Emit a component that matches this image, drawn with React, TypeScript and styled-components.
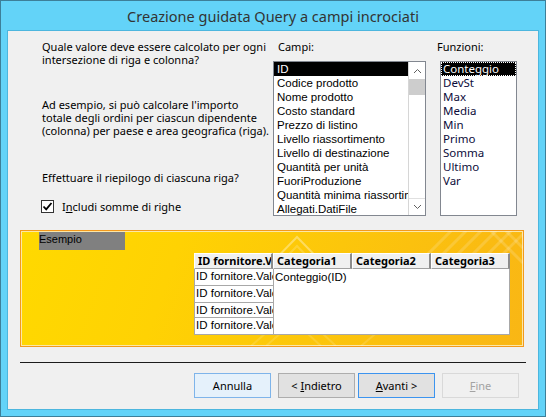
import React from "react";
import styled, { createGlobalStyle } from "styled-components";

const Global = createGlobalStyle`
  html, body { margin: 0; padding: 0; background: #ffffff; }
  body { font-family: "Noto Sans", sans-serif; }
  * { box-sizing: border-box; }
`;

const Window = styled.div`
  width: 546px;
  height: 417px;
  border: 1px solid #3d7f99;
  background: #63d3f8;
  display: flex;
  flex-direction: column;
`;

const TitleBar = styled.div`
  height: 29px;
  display: flex;
  align-items: center;
  justify-content: center;
  padding-top: 1px;
  font-family: "Noto Sans", sans-serif;
  font-size: 14.5px;
  color: #333333;
`;

const Client = styled.div`
  flex: 1;
  margin: 0 6px 6px;
  border: 1px solid #4cb6de;
  background: #f0f0f0;
  display: flex;
  flex-direction: column;
`;

const TopArea = styled.div`
  height: 199px;
  padding: 9px 0 0 34px;
  display: flex;
`;

const LeftCol = styled.div`
  width: 231px;
  display: flex;
  flex-direction: column;
`;

const Para = styled.div<{ $mt?: number }>`
  margin-top: ${(p) => p.$mt ?? 0}px;
  font-family: "Noto Sans", sans-serif;
  font-size: 11px;
  line-height: 13px;
  color: #000;
  white-space: nowrap;
`;

const CheckRow = styled.label`
  margin-top: 14px;
  height: 16px;
  display: flex;
  align-items: center;
  gap: 8px;
  margin-left: -1px;
  font-family: "Noto Sans", sans-serif;
  font-size: 11px;
  color: #000;
`;

const CheckBox = styled.span`
  width: 13px;
  height: 13px;
  border: 1px solid #333;
  background: #fff;
  display: flex;
  align-items: center;
  justify-content: center;
`;

const FieldCol = styled.div<{ $w: number; $ml?: number }>`
  width: ${(p) => p.$w}px;
  margin-left: ${(p) => p.$ml ?? 0}px;
  display: flex;
  flex-direction: column;
`;

const FieldLabel = styled.div<{ $indent: number }>`
  height: 13px;
  line-height: 13px;
  margin-left: ${(p) => p.$indent}px;
  font-family: "Noto Sans", sans-serif;
  font-size: 11px;
  color: #000;
  white-space: nowrap;
`;

const ListBox = styled.div`
  margin-top: 8px;
  height: 155px;
  border: 1px solid #828790;
  background: #fff;
  display: flex;
  overflow: hidden;
`;

const Items = styled.div`
  flex: 1;
  min-width: 0;
  display: flex;
  flex-direction: column;
`;

const Item = styled.div<{ $sel?: boolean; $focus?: boolean; $kind: "campi" | "funz" }>`
  flex: none;
  height: 14px;
  line-height: 14px;
  padding-left: ${(p) => (p.$kind === "campi" ? 3 : 2)}px;
  white-space: nowrap;
  overflow: hidden;
  font-family: ${(p) =>
    p.$kind === "campi" ? `"Liberation Sans", Arial, sans-serif` : `"Noto Sans", sans-serif`};
  font-size: 11.5px;
  background: ${(p) => (p.$sel ? "#000" : "transparent")};
  color: ${(p) => (p.$sel ? "#fff" : p.$kind === "funz" ? "#0c0c3a" : "#000")};
  outline: ${(p) => (p.$focus ? "1px dotted #fff" : "none")};
  outline-offset: -1px;
`;

const ScrollBar = styled.div`
  width: 17px;
  border-left: 1px solid #d6d6d6;
  background: #fff;
  display: flex;
  flex-direction: column;
`;

const ScrollBtn = styled.div<{ $bottom?: boolean }>`
  height: 17px;
  display: flex;
  align-items: center;
  justify-content: center;
  border-top: ${(p) => (p.$bottom ? "1px solid #e0e0e0" : "none")};
`;

const Track = styled.div`
  flex: 1;
  background: #fff;
`;

const Thumb = styled.div`
  height: 16px;
  background: #cdcdcd;
`;

const Sample = styled.div`
  position: relative;
  margin-left: 12px;
  width: 504px;
  height: 117px;
  border: 1px solid #f39a1c;
  box-shadow: inset 0 0 0 1px #fde7a6;
  background: linear-gradient(110deg, #ffd900 0%, #ffd203 30%, #fcc60b 60%, #f9b615 100%);
  padding: 1px 0 0 18px;
  overflow: hidden;
`;

const Deco = styled.svg`
  position: absolute;
  inset: 0;
  pointer-events: none;
`;

const SampleLabel = styled.div`
  position: relative;
  width: 86px;
  height: 18px;
  background: #808080;
  font-family: "Liberation Sans", Arial, sans-serif;
  font-size: 11px;
  line-height: 14px;
  color: #000;
`;

const Grid = styled.div`
  position: relative;
  margin: 3px 0 0 155px;
  display: grid;
  grid-template-columns: 79px 79px 79px 79px;
  grid-template-rows: 16px 17px 17px 15px 17px;
  width: 316px;
`;

const HeadCell = styled.div`
  background: #f0f0f0;
  border-top: 1px solid #fff;
  border-left: 1px solid #fff;
  border-right: 2px solid #8c8c8c;
  border-bottom: 1px solid #a0a0a0;
  padding-left: 3px;
  font-family: "Noto Sans", sans-serif;
  font-weight: 700;
  font-size: 11px;
  line-height: 14px;
  color: #000;
  white-space: nowrap;
  overflow: hidden;
`;

const RowCell = styled.div`
  background: #fff;
  border-left: 1px solid #a8a8a8;
  border-bottom: 1px solid #a8a8a8;
  padding-left: 1px;
  font-family: "Liberation Sans", Arial, sans-serif;
  font-size: 11.5px;
  line-height: 15px;
  color: #000;
  white-space: nowrap;
  overflow: hidden;
`;

const DataArea = styled.div`
  grid-column: 2 / 5;
  grid-row: 2 / 6;
  background: #fff;
  border: 1px solid #a8a8a8;
  border-top: none;
  padding-left: 1px;
  font-family: "Liberation Sans", Arial, sans-serif;
  font-size: 11.5px;
  line-height: 16px;
  color: #000;
`;

const Separator = styled.div`
  margin: 15px 0 0 12px;
  width: 506px;
  height: 1px;
  background: #1c1c1c;
`;

const ButtonRow = styled.div`
  margin-top: 10px;
  padding-left: 186px;
  display: flex;
  gap: 7px;
`;

const NavGroup = styled.div`
  display: flex;
  gap: 3px;
`;

const Button = styled.div<{ $variant: "hover" | "normal" | "default" | "disabled" }>`
  width: 77px;
  height: 25px;
  display: flex;
  align-items: center;
  justify-content: center;
  font-family: "Noto Sans", sans-serif;
  font-size: 11px;
  white-space: pre;
  border: 1px solid
    ${(p) =>
      p.$variant === "hover"
        ? "#7eb4ea"
        : p.$variant === "default"
        ? "#3c94ef"
        : p.$variant === "disabled"
        ? "#d9d9d9"
        : "#adadad"};
  background: ${(p) =>
    p.$variant === "hover" ? "#e5f1fb" : p.$variant === "disabled" ? "#f0f0f0" : "#e1e1e1"};
  color: ${(p) => (p.$variant === "disabled" ? "#a3a3a3" : "#000")};
`;

const Chevron = ({ up }: { up?: boolean }) => (
  <svg width="9" height="6" viewBox="0 0 9 6">
    <polyline
      points={up ? "1,5 4.5,1.5 8,5" : "1,1 4.5,4.5 8,1"}
      fill="none"
      stroke="#606060"
      strokeWidth="1"
    />
  </svg>
);

const campi = [
  "ID",
  "Codice prodotto",
  "Nome prodotto",
  "Costo standard",
  "Prezzo di listino",
  "Livello riassortimento",
  "Livello di destinazione",
  "Quantità per unità",
  "FuoriProduzione",
  "Quantità minima riassortimento",
  "Allegati.DatiFile",
];

const funzioni = ["Conteggio", "DevSt", "Max", "Media", "Min", "Primo", "Somma", "Ultimo", "Var"];

export default function App() {
  return (
    <>
      <Global />
      <Window>
        <TitleBar>Creazione guidata Query a campi incrociati</TitleBar>
        <Client>
          <TopArea>
            <LeftCol>
              <Para>
                Quale valore deve essere calcolato per ogni
                <br />
                intersezione di riga e colonna?
              </Para>
              <Para $mt={32}>
                Ad esempio, si può calcolare l'importo
                <br />
                totale degli ordini per ciascun dipendente
                <br />
                (colonna) per paese e area geografica (riga).
              </Para>
              <Para $mt={34}>Effettuare il riepilogo di ciascuna riga?</Para>
              <CheckRow>
                <CheckBox>
                  <svg width="11" height="11" viewBox="0 0 11 11">
                    <polyline
                      points="1.5,5.5 4.2,8.3 9.5,2"
                      fill="none"
                      stroke="#000"
                      strokeWidth="1.8"
                    />
                  </svg>
                </CheckBox>
                <span>
                  I<u>n</u>cludi somme di righe
                </span>
              </CheckRow>
            </LeftCol>
            <FieldCol $w={153}>
              <FieldLabel $indent={5}>Campi:</FieldLabel>
              <ListBox>
                <Items>
                  {campi.map((c, i) => (
                    <Item key={c} $kind="campi" $sel={i === 0}>
                      {c}
                    </Item>
                  ))}
                </Items>
                <ScrollBar>
                  <ScrollBtn>
                    <Chevron up />
                  </ScrollBtn>
                  <Track>
                    <Thumb />
                  </Track>
                  <ScrollBtn $bottom>
                    <Chevron />
                  </ScrollBtn>
                </ScrollBar>
              </ListBox>
            </FieldCol>
            <FieldCol $w={77} $ml={14}>
              <FieldLabel $indent={-3}>Funzioni:</FieldLabel>
              <ListBox>
                <Items>
                  {funzioni.map((f, i) => (
                    <Item key={f} $kind="funz" $sel={i === 0} $focus={i === 0}>
                      {f}
                    </Item>
                  ))}
                </Items>
              </ListBox>
            </FieldCol>
          </TopArea>
          <Sample>
            <Deco width="502" height="115" viewBox="0 0 502 115">
              <g fill="none" stroke="#fff" strokeWidth="2">
                <polyline points="238,45 276,6 314,45" strokeOpacity="0.35" />
                <polyline points="247,45 276,15 305,45" strokeOpacity="0.18" />
                <g strokeOpacity="0.16" strokeWidth="3">
                  <line x1="430" y1="0" x2="400" y2="30" />
                  <line x1="445" y1="0" x2="412" y2="33" />
                  <line x1="460" y1="0" x2="425" y2="35" />
                  <line x1="475" y1="0" x2="438" y2="37" />
                  <line x1="490" y1="0" x2="452" y2="38" />
                  <line x1="505" y1="0" x2="466" y2="39" />
                  <line x1="470" y1="0" x2="502" y2="32" />
                  <line x1="485" y1="0" x2="502" y2="17" />
                </g>
                <g strokeOpacity="0.14" strokeWidth="2">
                  <line x1="230" y1="115" x2="270" y2="80" />
                  <line x1="245" y1="115" x2="285" y2="80" />
                  <line x1="300" y1="115" x2="262" y2="80" />
                  <line x1="315" y1="115" x2="277" y2="80" />
                  <line x1="340" y1="115" x2="372" y2="88" />
                </g>
              </g>
            </Deco>
            <SampleLabel>Esempio</SampleLabel>
            <Grid>
              <HeadCell>ID fornitore.Valore</HeadCell>
              <HeadCell>Categoria1</HeadCell>
              <HeadCell>Categoria2</HeadCell>
              <HeadCell>Categoria3</HeadCell>
              <RowCell>ID fornitore.Valore</RowCell>
              <DataArea>Conteggio(ID)</DataArea>
              <RowCell>ID fornitore.Valore</RowCell>
              <RowCell>ID fornitore.Valore</RowCell>
              <RowCell>ID fornitore.Valore</RowCell>
            </Grid>
          </Sample>
          <Separator />
          <ButtonRow>
            <Button $variant="hover">Annulla</Button>
            <NavGroup>
              <Button $variant="normal">
                <span>
                  {"< "}
                  <u>I</u>ndietro
                </span>
              </Button>
              <Button $variant="default">
                <span>
                  <u>A</u>
                  {"vanti >"}
                </span>
              </Button>
            </NavGroup>
            <Button $variant="disabled">
              <span>
                <u>F</u>ine
              </span>
            </Button>
          </ButtonRow>
        </Client>
      </Window>
    </>
  );
}
